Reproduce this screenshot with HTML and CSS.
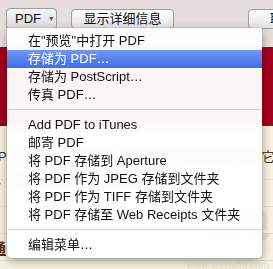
FILE: index.html
```html
<!DOCTYPE html>
<html lang="zh-CN">
<head>
    <meta charset="UTF-8">
    <meta name="viewport" content="width=device-width, initial-scale=1.0">
    <title>打印 PDF</title>
    <link rel="stylesheet" href="styles.css">
</head>
<body>
    <div class="screen">
        <div class="dialog">
            <button type="button" class="btn btn-pdf">PDF <span class="arrow">&#9660;</span></button>
            <button type="button" class="btn btn-detail">显示详细信息</button>
            <button type="button" class="btn btn-cancel">取消</button>
        </div>
        <div class="band"></div>
        <div class="page">
            <p class="line line-1">PDF 文件可以直接在浏览器中打开并保存为其它格式的文档它</p>
            <p class="line line-2">，点击这里查看更多的说明和设置</p>
            <h2 class="heading">通</h2>
            <div class="meta">QuickTime Video Editing <span class="circle"></span> 2 条评论</div>
            <div class="mark">下载吧<br><small>www.xiazaiba.com</small></div>
        </div>

        <div class="menu">
            <div class="item">在"预览"中打开 PDF</div>
            <div class="item active">存储为 PDF…</div>
            <div class="item">存储为 PostScript…</div>
            <div class="item">传真 PDF…</div>
            <div class="sep"></div>
            <div class="item">Add PDF to iTunes</div>
            <div class="item">邮寄 PDF</div>
            <div class="item">将 PDF 存储到 Aperture</div>
            <div class="item">将 PDF 作为 JPEG 存储到文件夹</div>
            <div class="item">将 PDF 作为 TIFF 存储到文件夹</div>
            <div class="item">将 PDF 存储至 Web Receipts 文件夹</div>
            <div class="sep"></div>
            <div class="item">编辑菜单…</div>
        </div>
    </div>
</body>
</html>
```

FILE: styles.css
```css
* {
    box-sizing: border-box;
    margin: 0;
    padding: 0;
}
body {
    font-family: "Liberation Sans", "Noto Sans CJK SC", sans-serif;
    font-size: 13px;
    color: #111;
    overflow: hidden;
}
.screen {
    position: relative;
    width: 273px;
    height: 269px;
    overflow: hidden;
}
.dialog {
    height: 47px;
    background-color: #e6dddd;
    display: flex;
    align-items: flex-start;
    padding: 8px 0 0 6px;
}
.btn {
    font-family: "Liberation Sans", "Noto Sans CJK SC", sans-serif;
    font-size: 13px;
    color: #111;
    background: linear-gradient(#ffffff, #f1f1f1 50%, #e4e4e4);
    border: 1px solid #9d9d9d;
    border-radius: 4px;
    height: 20px;
    line-height: 18px;
    white-space: nowrap;
    flex-shrink: 0;
}
.btn-pdf {
    width: 51px;
    height: 22px;
    text-align: left;
    padding-left: 8px;
    background: linear-gradient(#f4f4f4, #dcdcdc);
}
.arrow {
    font-size: 7px;
    color: #555;
    vertical-align: 2px;
    margin-left: 3px;
}
.btn-detail {
    width: 103px;
    margin-left: 14px;
    margin-top: 1px;
}
.btn-cancel {
    width: 70px;
    margin-left: 74px;
    margin-top: 1px;
    text-align: center;
}
.band {
    height: 79px;
    background-color: #a2001e;
}
.page {
    height: 143px;
    background-color: #f6f1e0;
    background-image: repeating-linear-gradient(#f6f1e0 0, #f6f1e0 26px, #e9e2cc 26px, #e9e2cc 27px);
    color: #5a3a1a;
    position: relative;
}
.line {
    white-space: nowrap;
    font-size: 13px;
    color: #4a3a2a;
}
.line-1 {
    padding-top: 20px;
    margin-left: -2px;
}
.line-2 {
    padding-top: 4px;
    margin-left: -4px;
}
.heading {
    font-size: 15px;
    line-height: 18px;
    margin: 52px 0 0 -9px;
    color: #5a2a10;
    text-decoration: underline;
    font-weight: bold;
}
.meta {
    margin: 25px 0 0 -8px;
    color: #7d5e36;
    font-size: 13px;
    line-height: 16px;
    white-space: nowrap;
}
.circle {
    display: inline-block;
    width: 12px;
    height: 12px;
    border: 1px solid #7d5e36;
    border-radius: 50%;
    margin: 0 2px 0 10px;
    vertical-align: -1px;
}
.mark {
    position: absolute;
    right: 4px;
    top: 84px;
    font-size: 32px;
    font-weight: bold;
    line-height: 32px;
    color: rgba(200, 195, 185, 0.35);
    text-align: right;
}
.mark small {
    font-size: 10px;
    font-weight: normal;
    line-height: 12px;
}

/* popup menu */
.menu {
    position: absolute;
    left: 7px;
    top: 28px;
    width: 255px;
    padding: 4px 0;
    background-color: rgba(255, 255, 255, 0.96);
    backdrop-filter: blur(3px);
    border-radius: 0 0 5px 5px;
    box-shadow: 0 3px 10px rgba(0, 0, 0, 0.35), 0 0 0 1px rgba(0, 0, 0, 0.06);
}
.item {
    height: 18px;
    line-height: 18px;
    padding-left: 21px;
    white-space: nowrap;
    color: #111;
}
.item.active {
    background: linear-gradient(#7097f3, #3f6fe9);
    color: #fff;
}
.sep {
    height: 12px;
    position: relative;
}
.sep::after {
    content: "";
    position: absolute;
    left: 1px;
    right: 1px;
    top: 5px;
    height: 1px;
    background-color: #d9d2d2;
}
```
